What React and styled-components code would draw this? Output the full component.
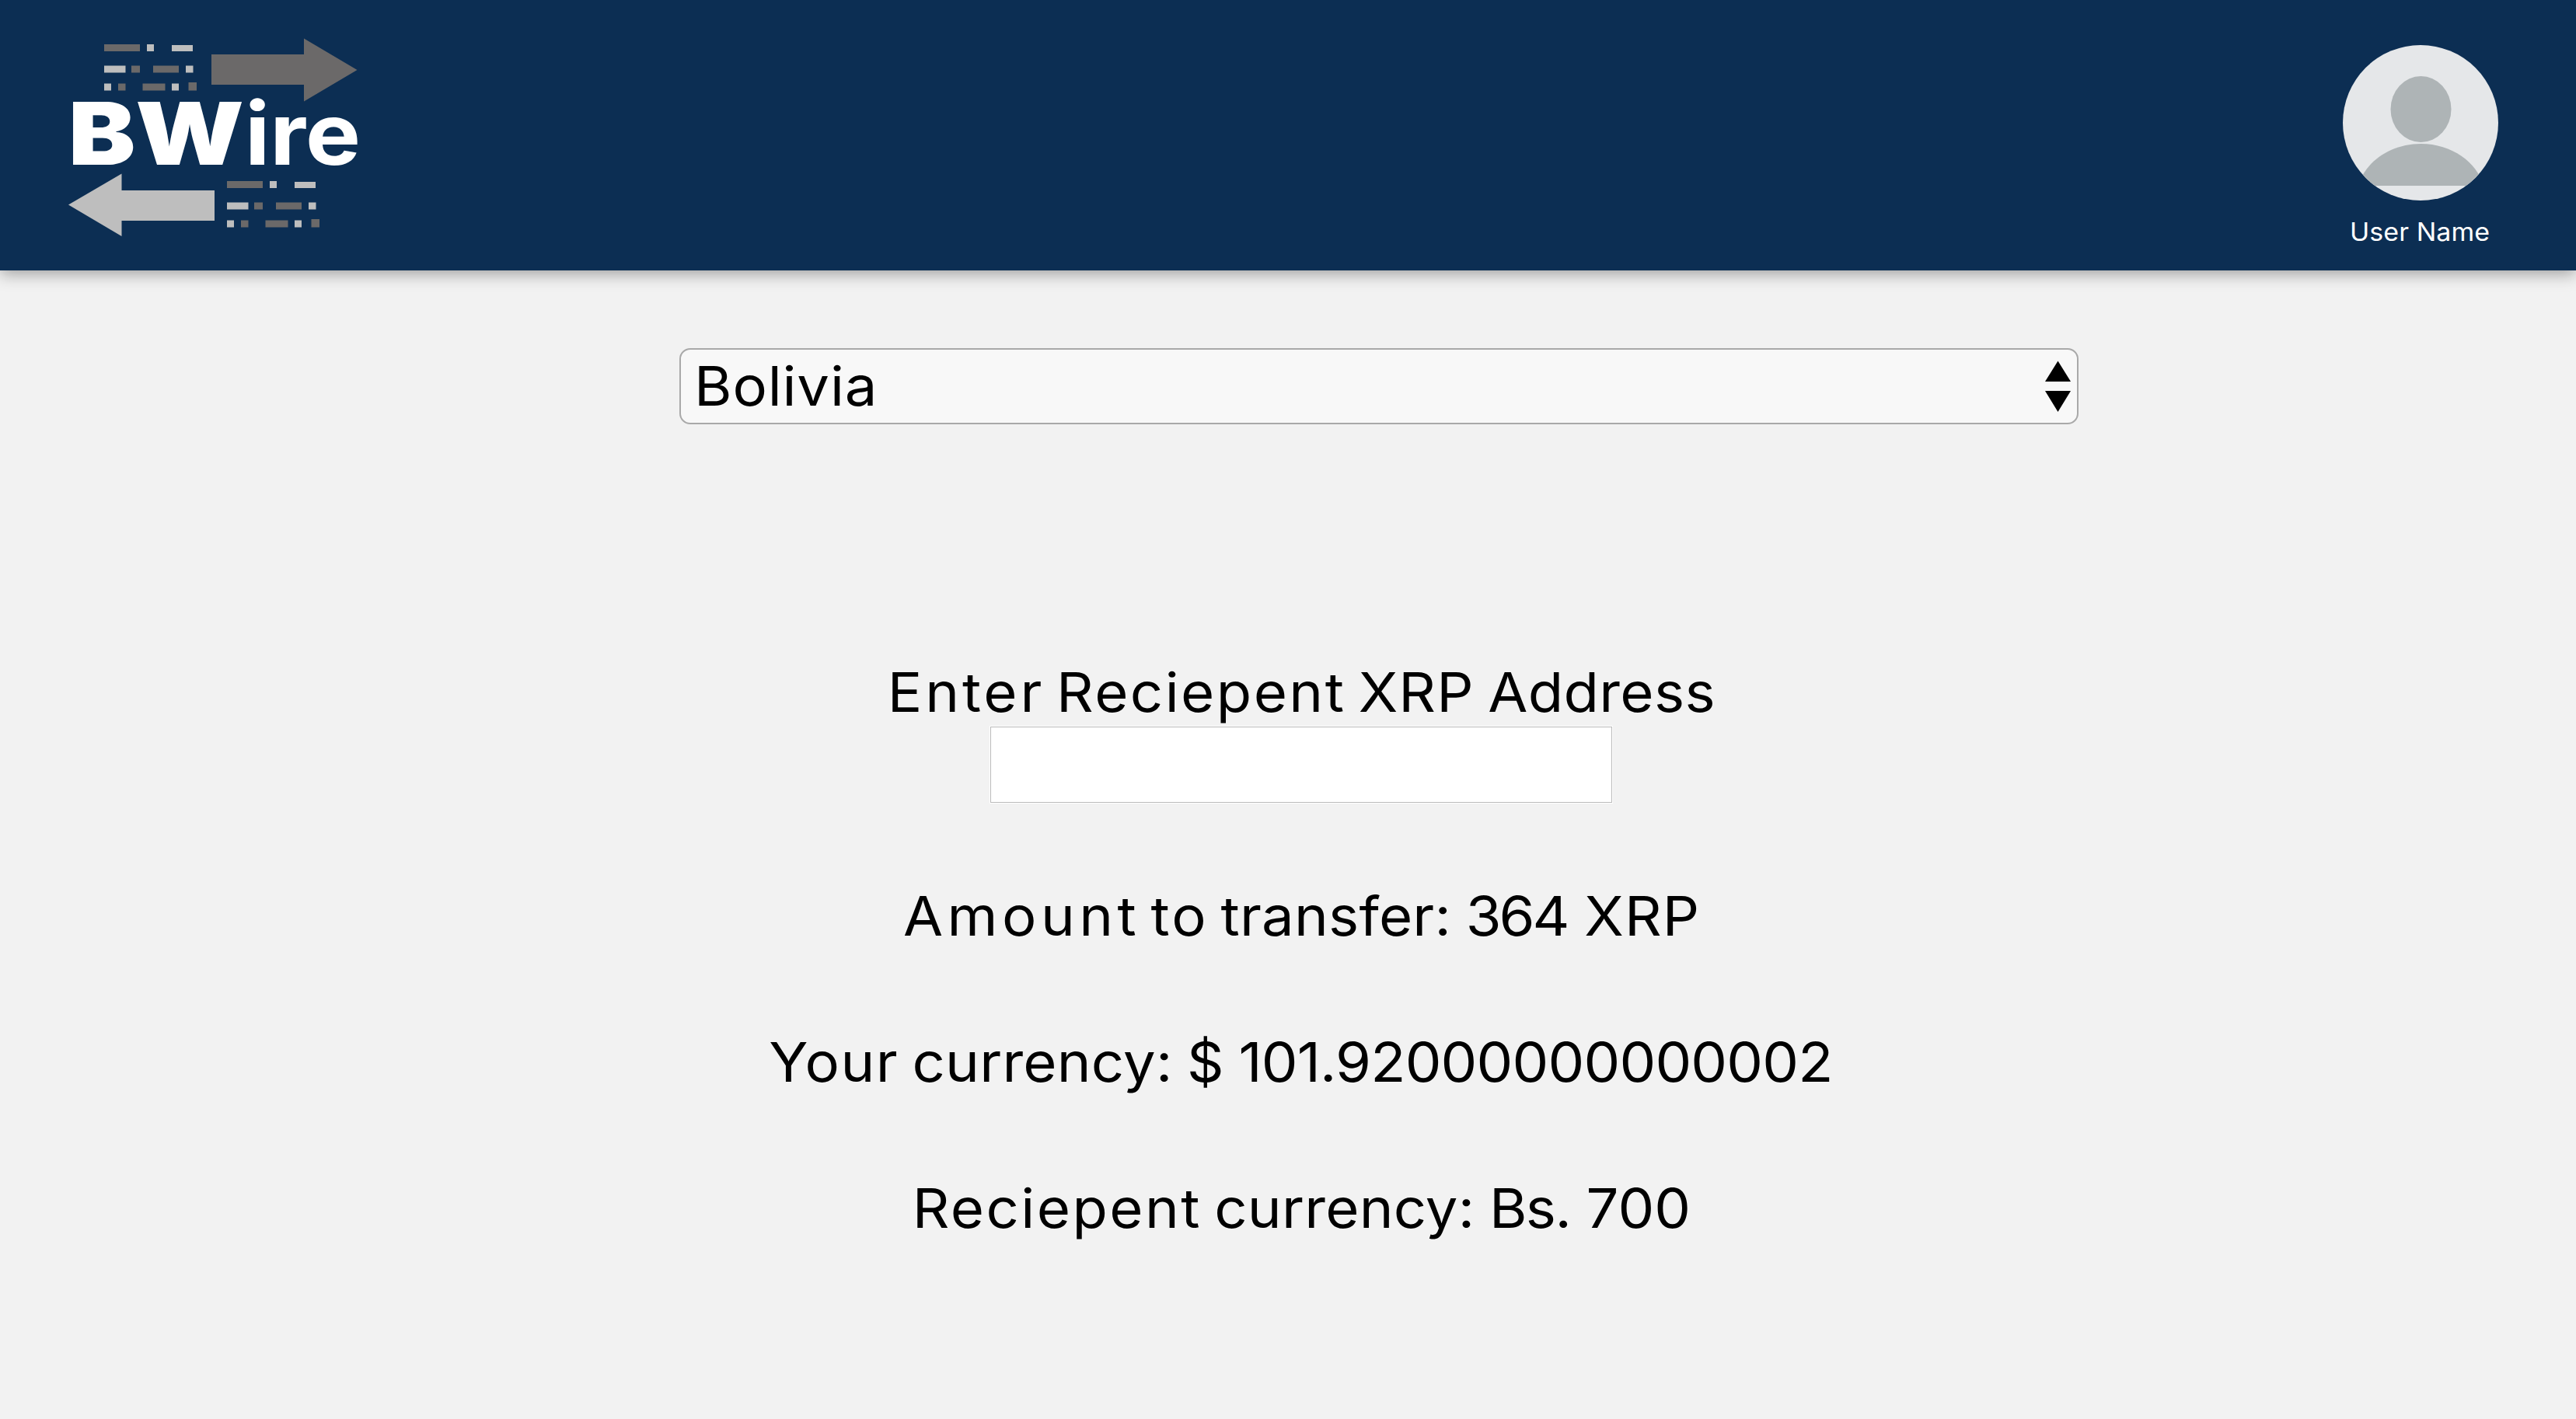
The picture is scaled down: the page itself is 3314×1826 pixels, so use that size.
import React, { Component, Fragment } from 'react';
import styled, { createGlobalStyle } from 'styled-components';

const GlobalStyle = createGlobalStyle`
	* {
		box-sizing: border-box;
	}

	body {
		margin: 0;
		background: #f2f2f2;
		font-family: Inter, 'Open Sans', sans-serif;
		color: #000;
	}
`;

const Page = styled.div`
	min-height: 1826px;
	background: #f2f2f2;
`;
const Header = styled.header`
	display: flex;
	justify-content: space-between;
	align-items: flex-start;
	height: 348px;
	padding: 49px 100px 0 88px;
	background: #0c2e53;
	box-shadow: 0 4px 20px rgba(0, 0, 0, 0.36);
`;
const User = styled.div`
	display: flex;
	flex-direction: column;
	align-items: center;
	width: 200px;
	padding-top: 9px;
`;
const UserName = styled.div`
	margin: 21px 2px 0 0;
	font-size: 32px;
	line-height: 40px;
	letter-spacing: 0.1px;
	white-space: nowrap;
	color: #fff;
	transform: scaleX(1.06);
`;
const Main = styled.main`
	display: flex;
	flex-direction: column;
	align-items: center;
	padding-top: 100px;
`;
const Select = styled.div`
	display: flex;
	justify-content: space-between;
	align-items: center;
	width: 1800px;
	height: 98px;
	margin-left: 234px;
	padding: 0 8px 0 17px;
	border: 2px solid #a9a9a9;
	border-radius: 14px;
	background: #f8f8f8;
`;
const Country = styled.div`
	font-size: 70px;
	line-height: 90px;
	letter-spacing: 0.8px;
	transform: scaleX(1.06);
	transform-origin: left;
`;
const Form = styled.div`
	display: flex;
	flex-direction: column;
	align-items: center;
	width: 1600px;
	margin: 298px 0 0 34px;
`;
const Input = styled.input`
	width: 802px;
	height: 100px;
	border: 1px solid #fff;
	outline: 1px solid #bababa;
	outline-offset: -2px;
	background: #fff;
`;
const Line = styled.div`
	margin-top: ${props => props.$top || 0}px;
	padding-top: 3px;
	font-size: 70px;
	line-height: 87px;
	word-spacing: -2px;
	white-space: nowrap;
	transform: scaleX(1.06);
`;
const Word = styled.span`
	margin-right: ${props => -props.$spacing}px;
	letter-spacing: ${props => props.$spacing}px;
`;

// each word carries its own tracking
const LABEL = [['Enter', 3.6], ['Reciepent', 2.3], ['XRP', 1], ['Address', 0.3]];
const AMOUNT = [['Amount', 5.1], ['to', 3], ['transfer:', 0.2], ['364', -2.8], ['XRP', 1]];
const SENDER = [['Your', 1.4], ['currency:', 0.2], ['$', 0], ['101.92000000000002', -0.8]];
const RECEIVER = [['Reciepent', 2.3], ['currency:', 0.2], ['Bs.', -1.5], ['700', 0]];

const TextLine = ({ words, top }) => (
	<Line $top={top}>
		{words.map(([word, spacing], i) => (
			<Fragment key={word}>
				{i > 0 && ' '}
				<Word $spacing={spacing}>{word}</Word>
			</Fragment>
		))}
	</Line>
);

const DARK = '#6b6969';
const LIGHT = '#bebebe';

// x, y, width, height, color
const DASHES = [
	[46, 8, 46, 9, DARK],
	[101, 8, 9, 9, LIGHT],
	[133, 9, 27, 8, LIGHT],
	[46, 35.5, 27.5, 9, LIGHT],
	[81, 35.5, 11, 9, DARK],
	[109, 35.5, 33, 9, DARK],
	[151, 35.5, 9.5, 9, LIGHT],
	[46, 58.5, 9, 9, LIGHT],
	[64, 58.5, 9.5, 9, DARK],
	[95.5, 58.5, 29, 9, DARK],
	[133, 58.5, 9, 9, LIGHT],
	[154.5, 57, 10.5, 10.5, DARK]
];

const Dashes = ({ x, y }) => (
	<g transform={`translate(${x} ${y})`}>
		{DASHES.map(([dx, dy, width, height, fill]) => (
			<rect key={`${dx}-${dy}`} x={dx} y={dy} width={width} height={height} fill={fill} />
		))}
	</g>
);

const Logo = () => (
	<svg width="376" height="258" viewBox="0 0 376 258">
		<Dashes x={0} y={0} />
		<path d="M184 21H303V0.5L371.5 41L303 81.5V60H184Z" fill={DARK} />
		<text
			x="0"
			y="162.5"
			fill="#fff"
			fontFamily="Inter, sans-serif"
			fontSize="111"
			fontWeight="900"
			textLength="226"
			lengthAdjust="spacingAndGlyphs"
		>
			BW
		</text>
		<text
			x="227"
			y="162.5"
			fill="#fff"
			fontFamily="Inter, sans-serif"
			fontSize="111"
			fontWeight="700"
			textLength="149"
			lengthAdjust="spacingAndGlyphs"
		>
			ire
		</text>
		<path d="M188 196H68.5V174.5L0 214.5L68.5 255V235H188Z" fill={LIGHT} />
		<Dashes x={158} y={176} />
	</svg>
);

const Avatar = () => (
	<svg width="200" height="200" viewBox="0 0 200 200">
		<clipPath id="avatar">
			<circle cx="100" cy="100" r="100" />
		</clipPath>
		<g clipPath="url(#avatar)">
			<rect width="200" height="200" fill="#e5e7e9" />
			<ellipse cx="100.5" cy="82.5" rx="39" ry="42.5" fill="#aeb4b6" />
			<path d="M20 181C28 151 61 127 100.500 127S173 151 181 181Z" fill="#aeb4b6" />
		</g>
	</svg>
);

const Arrows = () => (
	<svg width="33" height="66" viewBox="0 0 33 66">
		<path d="M0 27L16.500 0.500L33 27ZM0 39H33L16.500 66Z" fill="#000" />
	</svg>
);

export default class TransferPage extends Component {
	render() {
		return (
			<Page>
				<GlobalStyle />
				<Header>
					<Logo />
					<User>
						<Avatar />
						<UserName>User Name</UserName>
					</User>
				</Header>

				<Main>
					<Select>
						<Country>Bolivia</Country>
						<Arrows />
					</Select>

					<Form>
						<TextLine words={LABEL} />
						<Input type="text" />
						<TextLine words={AMOUNT} top={98} />
						<TextLine words={SENDER} top={98} />
						<TextLine words={RECEIVER} top={98} />
					</Form>
				</Main>
			</Page>
		);
	}
}
